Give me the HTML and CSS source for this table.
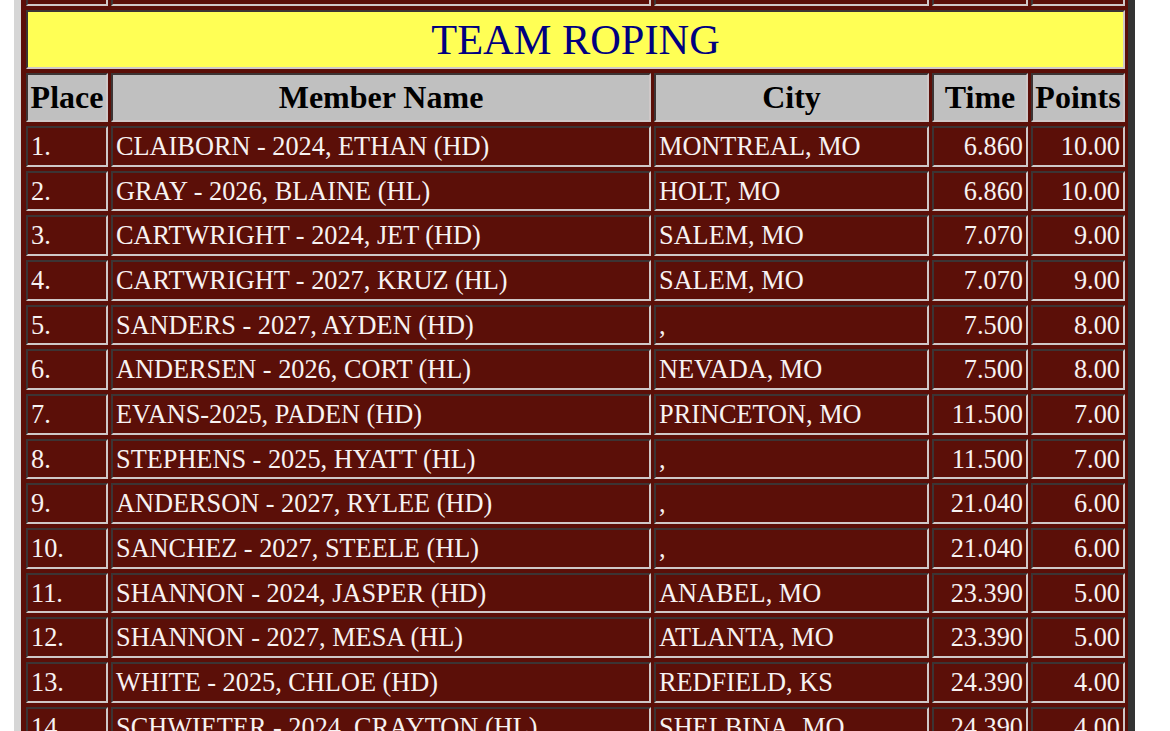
FILE: index.html
```html
<!DOCTYPE html>
<html>
<head>
<meta charset="utf-8">
<title>Team Roping</title>
<link rel="stylesheet" href="styles.css">
</head>
<body>
<div class="page">
  <div class="scroller">
    <table class="results">
      <tr class="prev">
        <td class="w-place">&nbsp;</td>
        <td class="w-name">&nbsp;</td>
        <td class="w-city">&nbsp;</td>
        <td class="w-time">&nbsp;</td>
        <td class="w-pts">&nbsp;</td>
      </tr>
      <tr class="title">
        <td colspan="5">TEAM ROPING</td>
      </tr>
      <tr class="head">
        <th>Place</th>
        <th>Member Name</th>
        <th>City</th>
        <th>Time</th>
        <th>Points</th>
      </tr>
      <tr class="row"><td>1.</td><td>CLAIBORN - 2024, ETHAN (HD)</td><td>MONTREAL, MO</td><td class="num">6.860</td><td class="num">10.00</td></tr>
      <tr class="row"><td>2.</td><td>GRAY - 2026, BLAINE (HL)</td><td>HOLT, MO</td><td class="num">6.860</td><td class="num">10.00</td></tr>
      <tr class="row"><td>3.</td><td>CARTWRIGHT - 2024, JET (HD)</td><td>SALEM, MO</td><td class="num">7.070</td><td class="num">9.00</td></tr>
      <tr class="row"><td>4.</td><td>CARTWRIGHT - 2027, KRUZ (HL)</td><td>SALEM, MO</td><td class="num">7.070</td><td class="num">9.00</td></tr>
      <tr class="row"><td>5.</td><td>SANDERS - 2027, AYDEN (HD)</td><td>,</td><td class="num">7.500</td><td class="num">8.00</td></tr>
      <tr class="row"><td>6.</td><td>ANDERSEN - 2026, CORT (HL)</td><td>NEVADA, MO</td><td class="num">7.500</td><td class="num">8.00</td></tr>
      <tr class="row"><td>7.</td><td>EVANS-2025, PADEN (HD)</td><td>PRINCETON, MO</td><td class="num">11.500</td><td class="num">7.00</td></tr>
      <tr class="row"><td>8.</td><td>STEPHENS - 2025, HYATT (HL)</td><td>,</td><td class="num">11.500</td><td class="num">7.00</td></tr>
      <tr class="row"><td>9.</td><td>ANDERSON - 2027, RYLEE (HD)</td><td>,</td><td class="num">21.040</td><td class="num">6.00</td></tr>
      <tr class="row"><td>10.</td><td>SANCHEZ - 2027, STEELE (HL)</td><td>,</td><td class="num">21.040</td><td class="num">6.00</td></tr>
      <tr class="row"><td>11.</td><td>SHANNON - 2024, JASPER (HD)</td><td>ANABEL, MO</td><td class="num">23.390</td><td class="num">5.00</td></tr>
      <tr class="row"><td>12.</td><td>SHANNON - 2027, MESA (HL)</td><td>ATLANTA, MO</td><td class="num">23.390</td><td class="num">5.00</td></tr>
      <tr class="row"><td>13.</td><td>WHITE - 2025, CHLOE (HD)</td><td>REDFIELD, KS</td><td class="num">24.390</td><td class="num">4.00</td></tr>
      <tr class="row"><td>14.</td><td>SCHWIETER - 2024, CRAYTON (HL)</td><td>SHELBINA, MO</td><td class="num">24.390</td><td class="num">4.00</td></tr>
    </table>
  </div>
</div>
</body>
</html>
```

FILE: styles.css
```css
html, body {
  margin: 0;
  padding: 0;
  background: #ffffff;
}

.page {
  height: 731px;
  overflow: hidden;
}

.scroller {
  margin-top: -44.67px;
  padding-left: 14px;
}

.results {
  box-sizing: border-box;
  width: 1121px;
  table-layout: fixed;
  border-collapse: separate;
  border-spacing: 3px 4px;
  background: #5b0f08;
  border-style: solid;
  border-width: 6px 7px 6px 7px;
  border-color: #d6d6d6 #333333 #333333 #d6d6d6;
  padding: 0 0 0 2px;
  font-family: "Liberation Serif", "Times New Roman", serif;
}

.results td,
.results th {
  box-sizing: border-box;
  border-style: solid;
  border-width: 2px;
  border-color: #3c3434 #cfc8c8 #cfc8c8 #3c3434;
  padding: 0 3px;
  vertical-align: middle;
  white-space: nowrap;
  overflow: hidden;
}

.w-place { width: 82px; }
.w-name { width: 540px; }
.w-city { width: 275px; }
.w-time { width: 96px; }
.w-pts { width: 94px; }

.prev td {
  line-height: 36.67px;
  background: #5b0f08;
}

.title td {
  background: #ffff55;
  color: #000080;
  font-size: 42.4px;
  line-height: 55px;
  text-align: center;
  font-weight: normal;
}

.head th {
  background: #c0c0c0;
  color: #000000;
  font-size: 32px;
  font-weight: bold;
  line-height: 45px;
  text-align: center;
  padding: 0 1px;
}

.row td {
  background: #5b0f08;
  color: #f7f2f2;
  font-size: 26.3px;
  line-height: 34.67px;
  padding-top: 2px;
  text-align: left;
}

.row td.num {
  text-align: right;
}
```
